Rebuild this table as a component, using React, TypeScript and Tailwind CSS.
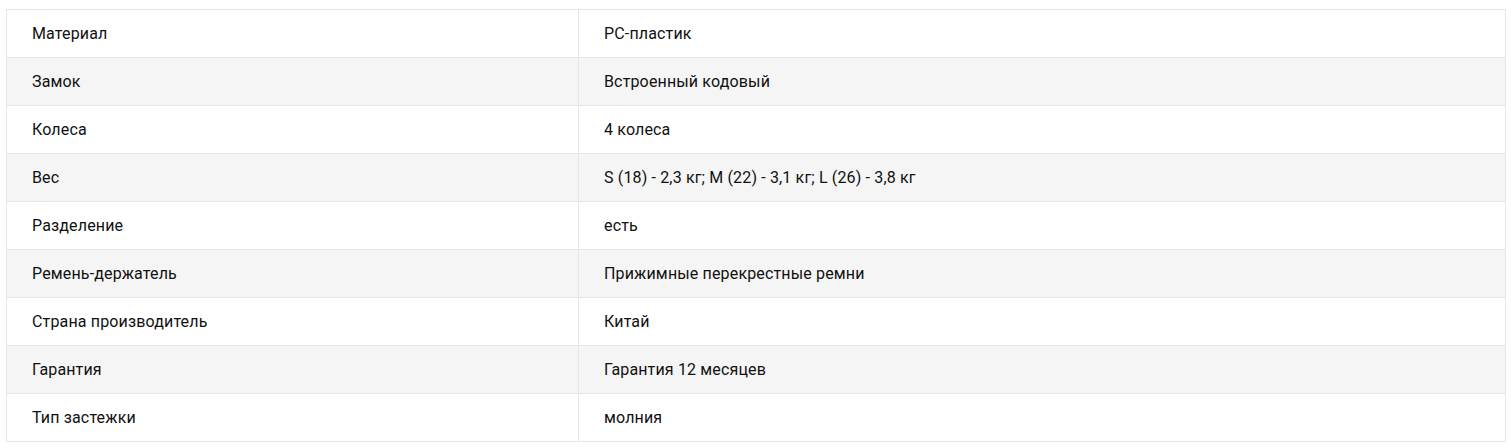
import React from 'react';

const rows: Array<[string, string]> = [
  ['Материал', 'PC-пластик'],
  ['Замок', 'Встроенный кодовый'],
  ['Колеса', '4 колеса'],
  ['Вес', 'S (18) - 2,3 кг; M (22) - 3,1 кг; L (26) - 3,8 кг'],
  ['Разделение', 'есть'],
  ['Ремень-держатель', 'Прижимные перекрестные ремни'],
  ['Страна производитель', 'Китай'],
  ['Гарантия', 'Гарантия 12 месяцев'],
  ['Тип застежки', 'молния'],
];

export default function App() {
  return (
    <div className="bg-white w-[1511px] h-[448px] pl-[6px] pt-[9px] font-['Roboto',sans-serif] text-[16px] tracking-[0.15px] text-[#111]">
      <table className="w-[1500px] border-collapse">
        <tbody>
          {rows.map(([name, value], i) => (
            <tr key={name} className={i % 2 === 1 ? 'bg-[#f5f5f5]' : 'bg-white'}>
              <td className="w-[572px] h-[48px] border border-[#e6e6e6] pl-[25px] align-middle">{name}</td>
              <td className="h-[48px] border border-[#e6e6e6] pl-[25px] align-middle">{value}</td>
            </tr>
          ))}
        </tbody>
      </table>
    </div>
  );
}
